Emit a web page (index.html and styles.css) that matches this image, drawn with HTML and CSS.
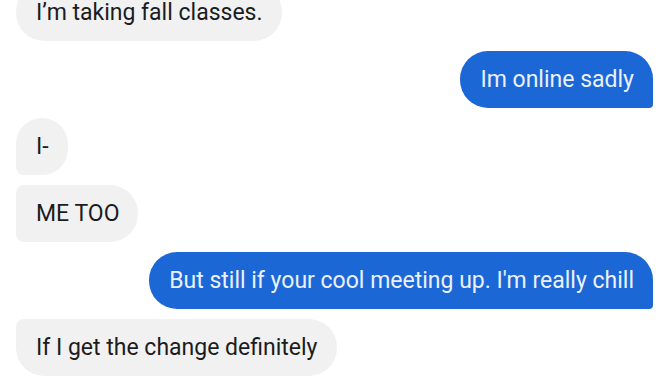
FILE: index.html
```html
<!DOCTYPE html>
<html lang="en">
<head>
    <meta charset="UTF-8">
    <meta name="viewport" content="width=device-width, initial-scale=1.0">
    <title>Messages</title>
    <link rel="stylesheet" href="styles.css">
</head>
<body>

    <div class="thread">
        <div class="msg in single">I’m taking fall classes.</div>
        <div class="msg out">Im online sadly</div>
        <div class="msg in first">I-</div>
        <div class="msg in middle">ME TOO</div>
        <div class="msg out">But still if your cool meeting up. I'm really chill</div>
        <div class="msg in last">If I get the change definitely</div>
    </div>

</body>
</html>
```

FILE: styles.css
```css
body {
    margin: 0;
    background-color: #fff;
    font-family: Roboto, "Noto Sans", sans-serif;
    overflow: hidden;
}

.thread {
    display: flex;
    flex-direction: column;
    gap: 10px;
    margin-top: -16px;
    padding: 0 19px 0 16px;
}

.msg {
    font-size: 23px;
    line-height: 26px;
    padding: 16px 19px 15px 20px;
    border-radius: 28px;
    max-width: 85%;
}

.in {
    align-self: flex-start;
    background-color: #f1f1f2;
    color: #1c1c1e;
}

.in.first {
    border-bottom-left-radius: 8px;
}

.in.middle {
    border-top-left-radius: 8px;
    border-bottom-left-radius: 8px;
}

.in.last {
    border-top-left-radius: 8px;
}

.out {
    align-self: flex-end;
    background-color: #1b67d6;
    color: #eaf1fd;
    border-bottom-right-radius: 4px;
}
```
